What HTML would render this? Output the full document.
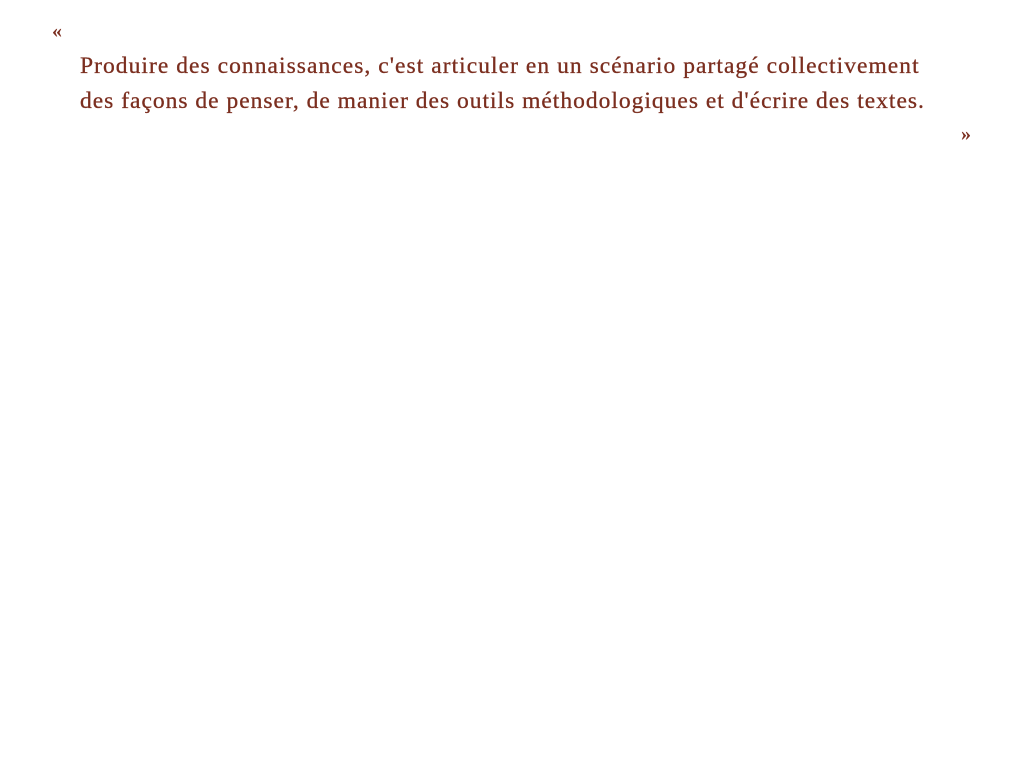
<!DOCTYPE html>
<html><head><meta charset="utf-8"><style>
body{margin:0;background:#fff;width:1024px;height:768px;overflow:hidden;font-family:"Liberation Serif",serif;color:#7b2e1f;}
.q{position:absolute;font-size:20px;font-weight:bold;}
.l{position:absolute;left:80px;font-size:23.5px;white-space:nowrap;letter-spacing:1.05px;-webkit-text-stroke:0.3px #7b2e1f;}
</style></head><body>
<div class="q" style="left:52px;top:20px;">«</div>
<div class="l" style="top:53px;">Produire des connaissances, c'est articuler en un scénario partagé collectivement</div>
<div class="l" style="top:88px;letter-spacing:1.0px;">des façons de penser, de manier des outils méthodologiques et d'écrire des textes.</div>
<div class="q" style="left:961px;top:123px;">»</div>
</body></html>
